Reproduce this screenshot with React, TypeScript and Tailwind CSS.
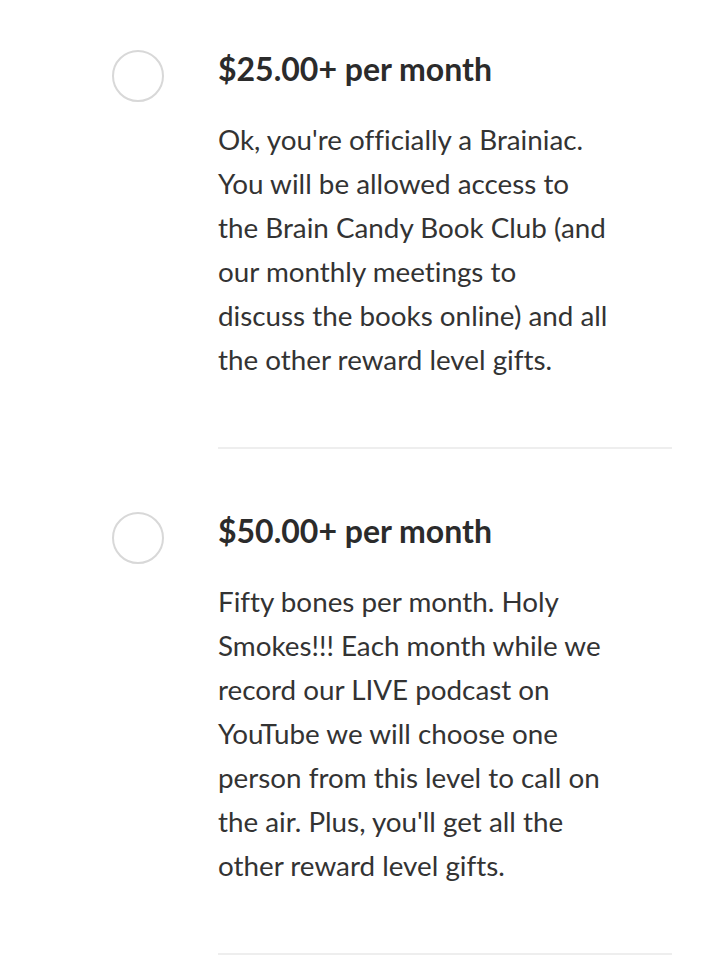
import React from "react";

const tiers = [
  {
    title: "$25.00+ per month",
    body: [
      "Ok, you're officially a Brainiac. You will be allowed access to the Brain Candy Book Club (and our monthly meetings to",
      "discuss the books online) and all the other reward level gifts.",
    ],
  },
  {
    title: "$50.00+ per month",
    body: [
      "Fifty bones per month. Holy Smokes!!! Each month while we record our LIVE podcast on YouTube we will choose one person from this level to call on the air. Plus, you'll get all the other reward level gifts.",
    ],
  },
];

export default function App() {
  return (
    <div
      className="min-h-[960px] bg-white pt-[48px] text-[#2d2d2d] [font-variant-ligatures:none]"
      style={{ fontFamily: "Lato, 'Noto Sans', sans-serif" }}
    >
      <div className="flex flex-col gap-[61px]">
        {tiers.map((t) => (
          <div key={t.title} className="flex">
            <div className="ml-[112px] mt-[2px] h-[52px] w-[52px] shrink-0 rounded-full border-2 border-[#d8d8d8]" />
            <div className="ml-[54px] w-[454px] border-b-2 border-[#eeeeee] pb-[65px]">
              <h2 className="text-[32px] font-bold leading-[42px] text-[#2b2b2b]">
                {t.title}
              </h2>
              <p className="mt-[28px] w-[398px] text-[27.8px] leading-[44px] text-[#333333]">
                {t.body.map((seg, i) => (
                  <React.Fragment key={i}>
                    {i > 0 && <br />}
                    {seg}
                  </React.Fragment>
                ))}
              </p>
            </div>
          </div>
        ))}
      </div>
    </div>
  );
}
